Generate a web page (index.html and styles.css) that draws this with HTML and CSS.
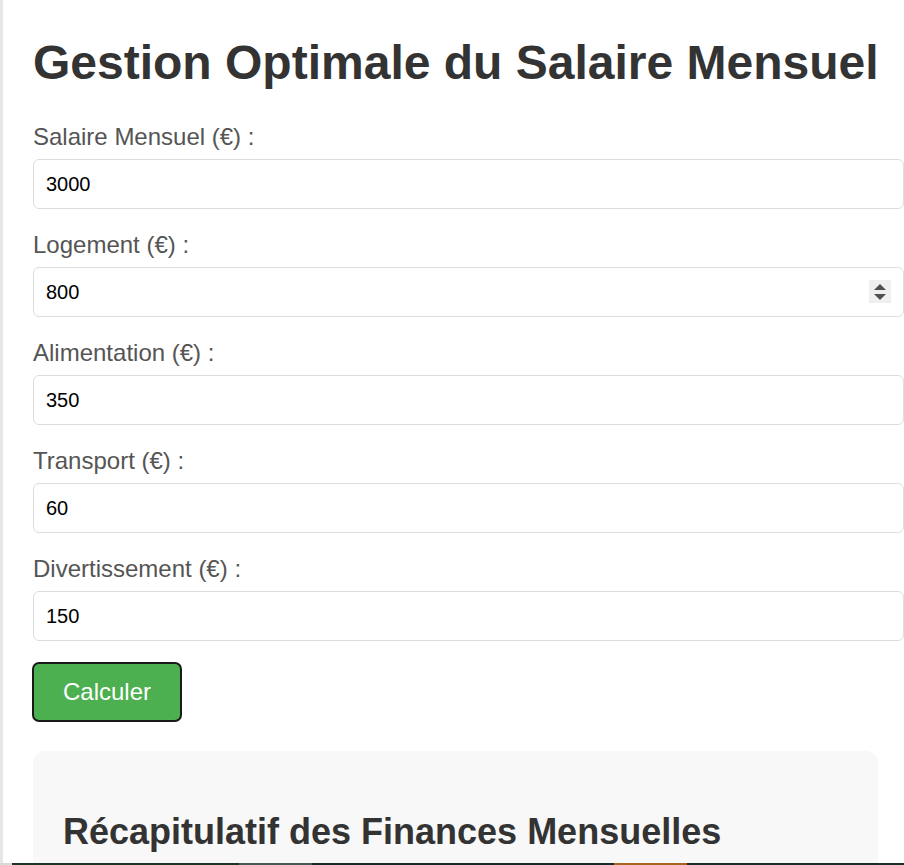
FILE: index.html
```html
<!DOCTYPE html>
<html lang="fr">
<head>
<meta charset="utf-8">
<title>Gestion Optimale du Salaire Mensuel</title>
<link rel="stylesheet" href="styles.css">
</head>
<body>
<div class="page">
  <main class="container">
    <h1 class="title">Gestion Optimale du Salaire Mensuel</h1>
    <form class="form">
      <div class="field">
        <label class="label" for="salaire">Salaire Mensuel (€) :</label>
        <input class="input" id="salaire" type="text" value="3000">
      </div>
      <div class="field">
        <label class="label" for="logement">Logement (€) :</label>
        <div class="input-wrap">
          <input class="input" id="logement" type="text" value="800">
          <span class="spinner" aria-hidden="true">
            <span class="tri tri-up"></span>
            <span class="tri tri-down"></span>
          </span>
        </div>
      </div>
      <div class="field">
        <label class="label" for="alimentation">Alimentation (€) :</label>
        <input class="input" id="alimentation" type="text" value="350">
      </div>
      <div class="field">
        <label class="label" for="transport">Transport (€) :</label>
        <input class="input" id="transport" type="text" value="60">
      </div>
      <div class="field">
        <label class="label" for="divertissement">Divertissement (€) :</label>
        <input class="input" id="divertissement" type="text" value="150">
      </div>
      <button class="button" type="button">Calculer</button>
    </form>
    <section class="results">
      <h2 class="results-title">Récapitulatif des Finances Mensuelles</h2>
    </section>
  </main>
</div>
<div class="taskbar"></div>
</body>
</html>
```

FILE: styles.css
```css
html, body {
  margin: 0;
  padding: 0;
  height: 100%;
  overflow: hidden;
}

body {
  background: #e6e6e6;
  font-family: "Liberation Sans", Arial, sans-serif;
}

.page {
  margin-left: 3px;
  background: #ffffff;
  min-height: 100%;
  padding-left: 30px;
  display: flow-root;
}

.container {
  width: 845px;
  display: flow-root;
}

.title {
  font-size: 48px;
  line-height: 56px;
  font-weight: bold;
  color: #333333;
  white-space: nowrap;
  margin: 35px 0 32px;
}

.form {
  display: flex;
  flex-direction: column;
  align-items: flex-start;
}

.field {
  width: 100%;
  margin-bottom: 22px;
}

.field:last-of-type {
  margin-bottom: 21px;
}

.label {
  display: block;
  font-size: 24px;
  line-height: 28px;
  color: #555555;
  margin-bottom: 8px;
}

.input-wrap {
  position: relative;
}

.input {
  display: block;
  box-sizing: content-box;
  width: 100%;
  margin: 0;
  padding: 12px;
  height: 24px;
  border: 1px solid #dddddd;
  border-radius: 6px;
  font-family: "Liberation Sans", Arial, sans-serif;
  font-size: 20px;
  line-height: 24px;
  color: #000000;
  background: #ffffff;
  outline: none;
}

.spinner {
  position: absolute;
  left: 836px;
  top: 13px;
  width: 22px;
  height: 23px;
  background: #efefef;
  display: flex;
  flex-direction: column;
  align-items: center;
  justify-content: center;
  gap: 4px;
}

.tri {
  width: 0;
  height: 0;
  border-left: 6px solid transparent;
  border-right: 6px solid transparent;
}

.tri-up {
  border-bottom: 6px solid #4f4f4f;
}

.tri-down {
  border-top: 6px solid #4f4f4f;
}

.button {
  box-sizing: border-box;
  width: 150px;
  height: 60px;
  margin-left: -1px;
  padding: 0;
  background: #4caf50;
  color: #ffffff;
  border: 2px solid #1a1a1a;
  border-radius: 7px;
  font-family: "Liberation Sans", Arial, sans-serif;
  font-size: 24px;
  line-height: 28px;
  cursor: pointer;
}

.results {
  margin-top: 29px;
  background: #f8f8f8;
  border-radius: 12px;
  padding: 30px;
  min-height: 200px;
}

.results-title {
  font-size: 36px;
  line-height: 42px;
  font-weight: bold;
  color: #333333;
  margin: 30px 0 0;
}

.taskbar {
  position: fixed;
  left: 0;
  right: 0;
  bottom: 0;
  height: 2px;
  background: linear-gradient(to right,
    #d9d9d9 0, #d9d9d9 12px,
    #1c3327 12px, #1c3327 239px,
    #4b5753 239px, #4b5753 312px,
    #1a2a2a 312px, #1a2a2a 614px,
    #a8641f 614px, #a8641f 687px,
    #1b2a2b 687px, #1b2a2b 100%);
}
```
